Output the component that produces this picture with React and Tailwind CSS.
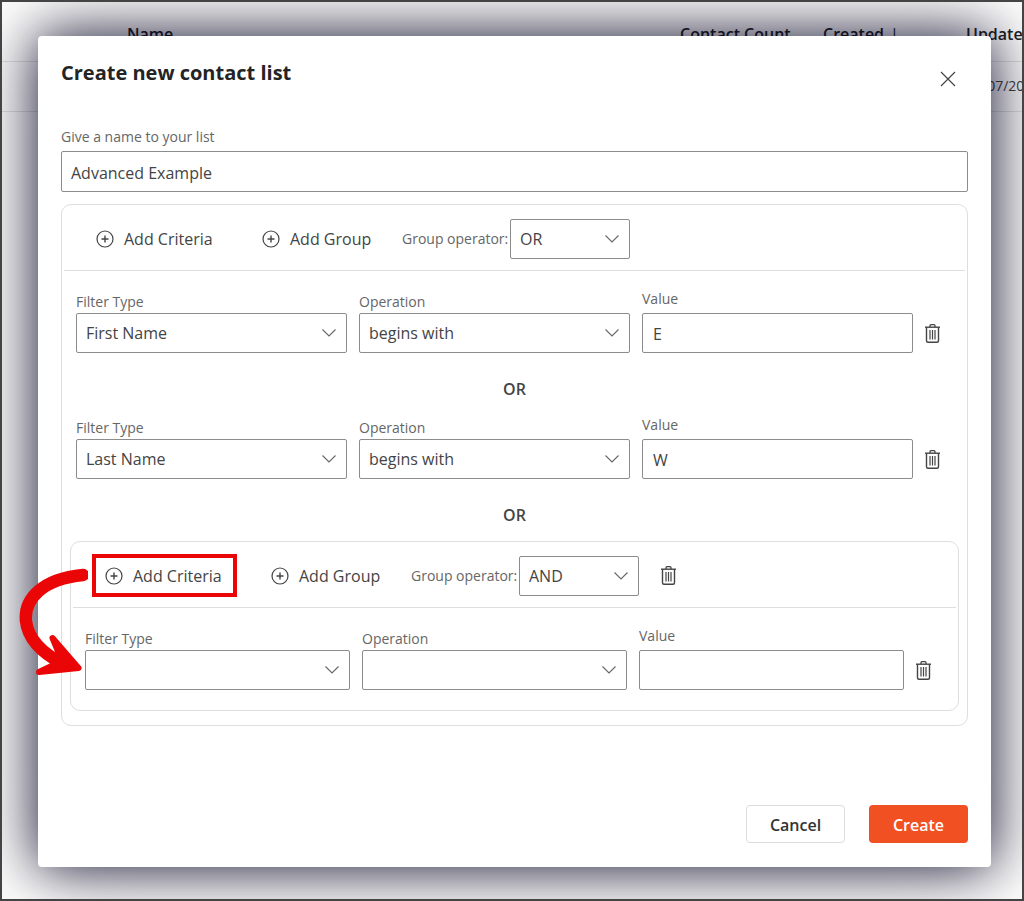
import { useId } from "react";

function PlusCircle() {
  return (
    <svg viewBox="0 0 18 18" className="size-[18px] shrink-0" fill="none" stroke="currentColor" aria-hidden="true">
      <circle cx="9" cy="9" r="8" strokeWidth="1.2" />
      <path d="M9 5.5v7M5.5 9h7" strokeWidth="1.4" />
    </svg>
  );
}

function TrashIcon() {
  return (
    <svg viewBox="0 0 15 19" className="h-[19px] w-[15px]" fill="none" stroke="currentColor" aria-hidden="true">
      <path d="M0 3.2h15" strokeWidth="1.4" />
      <path d="M5 3V1.700q0-1 1-1h3q1 0 1 1V3" strokeWidth="1.300" />
      <path d="M1.500 3.300v13.400q0 1.500 1.500 1.500h9q1.500 0 1.500-1.500V3.300" strokeWidth="1.400" />
      <path d="M5 6v9.500M7.500 6v9.500M10 6v9.500" strokeWidth="1.200" />
    </svg>
  );
}

function SelectBox({ id, value, options }) {
  return (
    <div className="relative">
      <select
        id={id}
        defaultValue={value}
        className="block h-10 w-full appearance-none rounded-xs border border-[#8c8c8c] bg-white pr-8 pl-[9px] text-base text-[#444]"
      >
        {options.map((o) => (
          <option key={o} value={o}>
            {o}
          </option>
        ))}
      </select>
      <svg
        viewBox="0 0 14 8"
        className="pointer-events-none absolute top-4 right-[11px] h-2 w-[14px] text-[#666]"
        fill="none"
        stroke="currentColor"
        aria-hidden="true"
      >
        <path d="M0.5 0.5 7 7 13.5 0.5" strokeWidth="1.1" />
      </svg>
    </div>
  );
}

function Toolbar({ operator, highlighted, removable }) {
  const id = useId();
  return (
    <div className="mx-0.5 flex h-[66px] items-center border-b border-[#dedede] pt-0.5 pl-8 text-[#444]">
      <button type="button" className="relative flex w-[166px] shrink-0 items-center gap-2.5 text-base">
        <PlusCircle />
        Add Criteria
        {highlighted && <Highlight />}
      </button>
      <button type="button" className="flex w-[140px] shrink-0 items-center gap-2.5 text-base">
        <PlusCircle />
        Add Group
      </button>
      <label htmlFor={id} className="w-[108px] shrink-0 text-sm whitespace-nowrap text-[#666]">
        Group operator:
      </label>
      <div className="w-[120px] shrink-0">
        <SelectBox id={id} value={operator} options={["OR", "AND"]} />
      </div>
      {removable && (
        <button type="button" aria-label="Remove group" className="ml-[22px]">
          <TrashIcon />
        </button>
      )}
    </div>
  );
}

function Highlight() {
  return (
    <span className="pointer-events-none absolute -top-[10px] -left-[13px] h-[43px] w-[145px] border-4 border-[#ea0606]">
      <svg
        viewBox="0 0 72 112"
        className="absolute top-[9px] -left-[80px] h-28 w-[72px] max-w-none"
        fill="none"
        stroke="#ea0606"
        strokeLinecap="round"
        strokeLinejoin="round"
        aria-hidden="true"
      >
        <path d="M67 8C26 12 8 32 10 54C12 72 26 86 47 97" strokeWidth="12.5" />
        <path d="M36.5 71 62.5 101 23 105 46 94Z" strokeWidth="6" fill="#ea0606" />
      </svg>
    </span>
  );
}

function CriteriaRow({ filter, operation, value }) {
  const id = useId();
  return (
    <div className="grid grid-cols-[1fr_1fr_1fr_28px] items-end gap-x-3 px-[14px] text-[#444]">
      <div>
        <label htmlFor={id + "f"} className="block pb-px text-sm text-[#666]">
          Filter Type
        </label>
        <SelectBox id={id + "f"} value={filter} options={["", "First Name", "Last Name"]} />
      </div>
      <div>
        <label htmlFor={id + "o"} className="block pb-px text-sm text-[#666]">
          Operation
        </label>
        <SelectBox id={id + "o"} value={operation} options={["", "begins with"]} />
      </div>
      <div>
        <label htmlFor={id + "v"} className="block pb-1 text-sm text-[#666]">
          Value
        </label>
        <input
          id={id + "v"}
          type="text"
          defaultValue={value}
          className="block h-10 w-full rounded-xs border border-[#8c8c8c] px-[10px] pt-0.5 text-base"
        />
      </div>
      <button type="button" aria-label="Remove criteria" className="flex h-10 items-center">
        <TrashIcon />
      </button>
    </div>
  );
}

function Joiner({ children }) {
  return <p className="pt-6 pb-[14px] text-center text-base font-semibold text-[#444]">{children}</p>;
}

function ContactTable() {
  return (
    <div className="absolute inset-0 overflow-hidden" aria-hidden="true">
      <table className="w-[1164px] table-fixed border-collapse text-left text-[#222]">
        <thead>
          <tr className="h-[59px] border-b border-[#e4e4e4] text-base">
            <th className="w-[125px]" />
            <th className="w-[553px] pt-[6px] font-semibold">Name</th>
            <th className="w-[143px] pt-[6px] font-semibold">Contact Count</th>
            <th className="w-[143px] pt-[6px] font-semibold">
              Created<span className="pl-[6px] font-normal">|</span>
            </th>
            <th className="pt-[6px] font-semibold">Updated</th>
          </tr>
        </thead>
        <tbody>
          <tr className="h-[50px] border-b border-[#e4e4e4] text-sm text-[#444]">
            <td />
            <td />
            <td />
            <td />
            <td>02/07/2023</td>
          </tr>
        </tbody>
      </table>
    </div>
  );
}

export default function App() {
  return (
    <div className="relative flex min-h-screen overflow-hidden border-2 border-[#444] bg-white pt-[34px] pr-[31px] pb-8 pl-9 font-['Open_Sans','Noto_Sans',sans-serif]">
      <ContactTable />
      <form
        role="dialog"
        aria-labelledby="dialog-title"
        onSubmit={(e) => e.preventDefault()}
        className="relative flex grow flex-col rounded-sm bg-white px-[23px] pt-[22px] pb-6 shadow-[0_0_54px_rgba(5,2,36,0.86),0_0_96px_rgba(0,0,0,0.24)]"
      >
        <header className="flex justify-between pr-3">
          <h1 id="dialog-title" className="text-xl leading-[30px] font-bold text-[#242424]">
            Create new contact list
          </h1>
          <button type="button" aria-label="Close" className="h-[42px] text-[#444]">
            <svg viewBox="0 0 16 16" className="size-4" fill="none" stroke="currentColor" aria-hidden="true">
              <path d="M1 1 15 15M15 1 1 15" strokeWidth="1.2" />
            </svg>
          </button>
        </header>

        <label htmlFor="list-name" className="mt-[27px] pb-1 text-sm text-[#666]">
          Give a name to your list
        </label>
        <input
          id="list-name"
          type="text"
          defaultValue="Advanced Example"
          className="h-[41px] w-full rounded-xs border border-[#8c8c8c] px-[9px] pt-0.5 text-base text-[#444]"
        />

        <section className="mt-3 rounded-[10px] border border-[#dedede] pb-[14px]">
          <Toolbar operator="OR" />
          <div className="pt-[18px]">
            <CriteriaRow filter="First Name" operation="begins with" value="E" />
            <Joiner>OR</Joiner>
            <CriteriaRow filter="Last Name" operation="begins with" value="W" />
            <Joiner>OR</Joiner>
          </div>
          <section className="mx-2 rounded-[10px] border border-[#dedede] pb-5">
            <Toolbar operator="AND" highlighted removable />
            <div className="pt-[18px]">
              <CriteriaRow filter="" operation="" value="" />
            </div>
          </section>
        </section>

        <footer className="mt-auto flex justify-end gap-6 text-base font-semibold">
          <button type="button" className="h-[38px] w-[99px] rounded-sm border border-[#dcdcdc] bg-white pt-0.5 text-[#333]">
            Cancel
          </button>
          <button type="submit" className="h-[38px] w-[99px] rounded-sm bg-[#f15023] pt-0.5 text-white">
            Create
          </button>
        </footer>
      </form>
    </div>
  );
}
